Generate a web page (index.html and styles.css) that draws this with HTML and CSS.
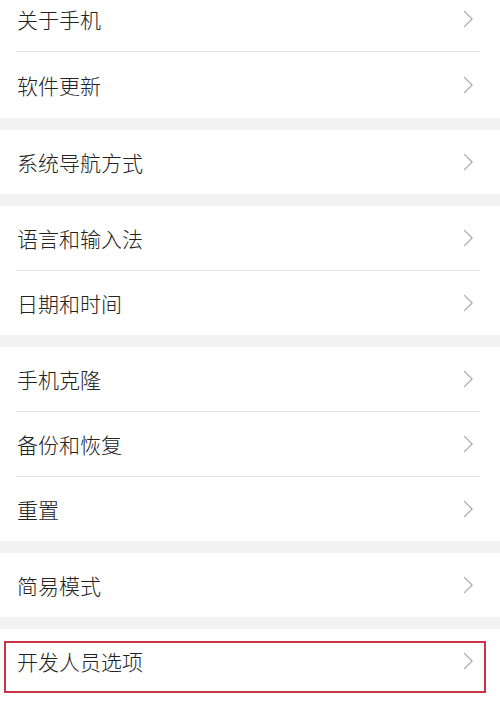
FILE: index.html
```html
<!DOCTYPE html>
<html lang="zh">
<head>
<meta charset="utf-8">
<link rel="stylesheet" href="styles.css">
</head>
<body>
<div class="page">
  <div class="group first">
    <div class="item"><span class="label">关于手机</span><svg class="chev" viewBox="0 0 12 20"><polyline points="1.5,1.5 10,10 1.5,18.5"/></svg></div>
    <div class="sep"></div>
    <div class="item"><span class="label">软件更新</span><svg class="chev" viewBox="0 0 12 20"><polyline points="1.5,1.5 10,10 1.5,18.5"/></svg></div>
  </div>
  <div class="group">
    <div class="item"><span class="label">系统导航方式</span><svg class="chev" viewBox="0 0 12 20"><polyline points="1.5,1.5 10,10 1.5,18.5"/></svg></div>
  </div>
  <div class="group">
    <div class="item"><span class="label">语言和输入法</span><svg class="chev" viewBox="0 0 12 20"><polyline points="1.5,1.5 10,10 1.5,18.5"/></svg></div>
    <div class="sep"></div>
    <div class="item"><span class="label">日期和时间</span><svg class="chev" viewBox="0 0 12 20"><polyline points="1.5,1.5 10,10 1.5,18.5"/></svg></div>
  </div>
  <div class="group">
    <div class="item"><span class="label">手机克隆</span><svg class="chev" viewBox="0 0 12 20"><polyline points="1.5,1.5 10,10 1.5,18.5"/></svg></div>
    <div class="sep"></div>
    <div class="item"><span class="label">备份和恢复</span><svg class="chev" viewBox="0 0 12 20"><polyline points="1.5,1.5 10,10 1.5,18.5"/></svg></div>
    <div class="sep"></div>
    <div class="item"><span class="label">重置</span><svg class="chev" viewBox="0 0 12 20"><polyline points="1.5,1.5 10,10 1.5,18.5"/></svg></div>
  </div>
  <div class="group">
    <div class="item"><span class="label">简易模式</span><svg class="chev" viewBox="0 0 12 20"><polyline points="1.5,1.5 10,10 1.5,18.5"/></svg></div>
  </div>
  <div class="group last">
    <div class="item highlighted"><span class="label">开发人员选项</span><svg class="chev" viewBox="0 0 12 20"><polyline points="1.5,1.5 10,10 1.5,18.5"/></svg></div>
  </div>
</div>
</body>
</html>
```
FILE: styles.css
```css
html, body {
  margin: 0;
  padding: 0;
  background: #ffffff;
}
body {
  width: 500px;
  height: 711px;
  overflow: hidden;
  font-family: "Noto Sans CJK SC", "Noto Sans", sans-serif;
}
.page {
  display: flex;
  flex-direction: column;
  gap: 12px;
  background: #f2f2f2;
  margin-top: -13px;
  height: 724px;
}
.group {
  background: #ffffff;
  display: flex;
  flex-direction: column;
}
.group.first .item:last-child {
  height: 66px;
}
.group.last {
  flex: 1;
}
.item {
  height: 64px;
  flex: none;
  display: flex;
  align-items: center;
  justify-content: space-between;
  padding: 0 26px 0 17px;
  position: relative;
}
.label {
  font-size: 21px;
  font-weight: 300;
  line-height: 1;
  color: #222222;
}
.chev {
  width: 11px;
  height: 18px;
  fill: none;
  stroke: #ababab;
  stroke-width: 1.4;
  stroke-linecap: round;
  stroke-linejoin: round;
}
.sep {
  height: 1px;
  flex: none;
  background: #e4e4e4;
  margin: 0 20px 0 16px;
}
.highlighted::after {
  content: "";
  position: absolute;
  left: 4px;
  top: 12px;
  width: 478px;
  height: 48px;
  border: 2px solid #c93545;
}
```
